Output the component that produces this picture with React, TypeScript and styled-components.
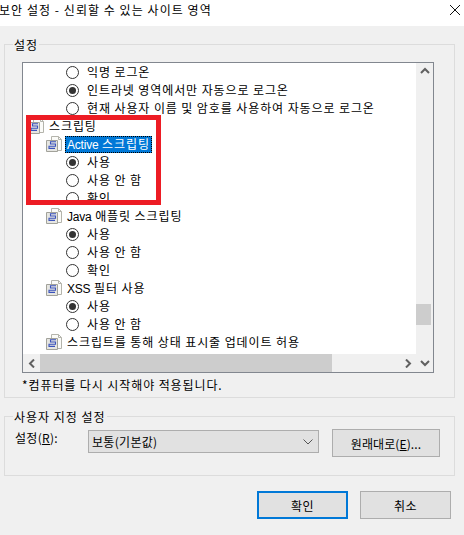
import React from "react";
import styled, { createGlobalStyle } from "styled-components";

const GlobalStyle = createGlobalStyle`
  html, body {
    margin: 0;
    padding: 0;
    background: #f0f0f0;
  }
  body {
    font-family: "Noto Sans CJK KR", "Liberation Sans", sans-serif;
    font-size: 12px;
    color: #000;
  }
`;

const Dialog = styled.div`
  position: relative;
  width: 464px;
  height: 535px;
  overflow: hidden;
  background: #f0f0f0;
`;

const TitleBar = styled.header`
  height: 26px;
  background: #fff;
  display: flex;
  align-items: center;
  justify-content: space-between;
  padding: 0 3px 6px 0;
  box-sizing: border-box;
  font-size: 12px;
  letter-spacing: 1.05px;
`;

const TitleText = styled.span`
  margin-left: -1px;
  line-height: 20px;
`;

const Body = styled.div`
  padding: 18px 9px 0 4px;
  display: flex;
  flex-direction: column;
`;

const Group = styled.section<{ $height: number; $mt?: number }>`
  position: relative;
  box-sizing: border-box;
  height: ${(p) => p.$height}px;
  margin-top: ${(p) => p.$mt ?? 0}px;
  border: 1px solid #dcdcdc;
`;

const Legend = styled.div`
  position: absolute;
  left: 8px;
  top: -9px;
  padding: 0 1px;
  background: #f0f0f0;
  line-height: 18px;
  letter-spacing: 1px;
`;

const ListFrame = styled.div`
  margin: 17px 20px 0 17px;
  height: 311px;
  box-sizing: border-box;
  border: 1px solid #82878f;
  background: #f0f0f0;
  display: grid;
  grid-template-columns: 393px 1fr;
  grid-template-rows: 291px 1fr;
`;

const Tree = styled.ul`
  margin: 0;
  padding: 0;
  list-style: none;
  background: #fff;
  overflow: hidden;
`;

const Row = styled.li<{ $indent: number }>`
  height: 18px;
  display: flex;
  align-items: center;
  padding-left: ${(p) => p.$indent}px;
  white-space: nowrap;
  letter-spacing: 0.9px;
`;

const Radio = styled.span<{ $checked?: boolean }>`
  flex: none;
  width: 13px;
  height: 13px;
  box-sizing: border-box;
  border: 1px solid #333;
  border-radius: 50%;
  margin-right: 8px;
  display: flex;
  align-items: center;
  justify-content: center;
  &::after {
    content: "";
    display: ${(p) => (p.$checked ? "block" : "none")};
    width: 7px;
    height: 7px;
    border-radius: 50%;
    background: #333;
  }
`;

const RadioLabel = styled.span`
  line-height: 16px;
`;

const HeadLabel = styled.span<{ $selected?: boolean }>`
  line-height: 16px;
  margin-left: ${(p) => (p.$selected ? "3px" : "5px")};
  ${(p) =>
    p.$selected
      ? `padding: 0 2px;
         background: #0078d7;
         color: #fff;
         height: 17px;
         outline: 1px dotted #000;
         outline-offset: -1px;`
      : ""}
`;

const Latin = styled.span`
  font-family: "Liberation Sans", sans-serif;
  letter-spacing: -0.2px;
`;

const VScroll = styled.div`
  grid-column: 2;
  grid-row: 1 / span 2;
  display: flex;
  flex-direction: column;
  align-items: stretch;
`;

const ArrowCell = styled.div`
  flex: none;
  height: 17px;
  display: flex;
  align-items: center;
  justify-content: center;
`;

const VTrack = styled.div`
  flex: 1;
  padding-top: 224px;
`;

const VThumb = styled.div`
  height: 21px;
  width: 15px;
  background: #cdcdcd;
`;

const HScroll = styled.div`
  grid-column: 1;
  grid-row: 2;
  display: flex;
  align-items: stretch;
`;

const HArrowCell = styled.div`
  flex: none;
  width: 17px;
  display: flex;
  align-items: center;
  justify-content: center;
`;

const HTrack = styled.div`
  flex: 1;
`;

const HThumb = styled.div`
  width: 292px;
  height: 100%;
  background: #cdcdcd;
`;

const Note = styled.p`
  margin: 3px 0 0 17px;
  line-height: 18px;
  letter-spacing: 0.9px;
`;

const SettingRow = styled.div`
  display: flex;
  align-items: flex-start;
  padding: 13px 0 0 10px;
`;

const FieldLabel = styled.label`
  width: 73px;
  line-height: 18px;
  margin-top: -1px;
  letter-spacing: 0.3px;
  u {
    text-decoration: underline;
  }
`;

const Select = styled.div`
  box-sizing: border-box;
  width: 231px;
  height: 23px;
  background: #e1e1e1;
  border: 1px solid #adadad;
  display: flex;
  align-items: center;
  justify-content: space-between;
  padding: 0 5px 0 3px;
  letter-spacing: 0.3px;
`;

const Button = styled.button<{ $primary?: boolean; $width?: number }>`
  box-sizing: border-box;
  width: ${(p) => p.$width ?? 91}px;
  height: 28px;
  padding: 0;
  font: inherit;
  color: #000;
  letter-spacing: 0.5px;
  background: #e1e1e1;
  border: ${(p) => (p.$primary ? "2px solid #0078d7" : "1px solid #adadad")};
  border-radius: 0;
`;

const ResetButton = styled(Button)`
  margin: -1px 0 0 13px;
  letter-spacing: 0.1px;
`;

const Footer = styled.footer`
  display: flex;
  justify-content: flex-end;
  gap: 12px;
  margin-top: 15px;
  margin-right: 4px;
`;

const Highlight = styled.div`
  position: absolute;
  left: 26px;
  top: 115px;
  width: 135px;
  height: 90px;
  box-sizing: border-box;
  border: 5px solid #ed1c24;
  pointer-events: none;
`;

const IconWrap = styled.svg`
  flex: none;
`;

const CloseGlyph = styled.svg`
  margin-right: 1px;
`;

const CloseIcon = () => (
  <CloseGlyph width="10" height="10" viewBox="0 0 10 10">
    <path d="M0 0L10 10M10 0L0 10" stroke="#111" strokeWidth="1" fill="none" />
  </CloseGlyph>
);

const ScriptIcon = () => (
  <IconWrap width="16" height="16" viewBox="0 0 16 16">
    <path d="M5.5 .5H12.5L15.5 3.5V14.5H5.5Z" fill="#fbfbf8" stroke="#b4b4ac" />
    <path d="M12.5 .5V3.5H15.5" fill="none" stroke="#b4b4ac" />
    <path d="M.5 4.5H11.5V15.5H.5Z" fill="#e6e6e2" stroke="#a2a29a" />
    <path
      d="M10 5.8H4.5V8H9.5V10.2H3V12.4H9"
      fill="none"
      stroke="#3a52bc"
      strokeWidth="1.1"
    />
  </IconWrap>
);

const Chevron = ({ dir }: { dir: "up" | "down" | "left" | "right" }) => {
  const d = {
    up: "M1 6L5 2L9 6",
    down: "M1 2L5 6L9 2",
    left: "M7 0.5L3 4.5L7 8.5",
    right: "M3 0.5L7 4.5L3 8.5",
  }[dir];
  return (
    <svg width="10" height="9" viewBox="0 0 10 9">
      <path d={d} stroke="#606060" strokeWidth="2" fill="none" />
    </svg>
  );
};

const SelectChevron = () => (
  <svg width="10" height="6" viewBox="0 0 10 6">
    <path d="M.5 .5L5 5L9.5 .5" stroke="#555" strokeWidth="1" fill="none" />
  </svg>
);

type Item =
  | { kind: "radio"; label: string; checked?: boolean }
  | { kind: "head"; label: string; latin?: string; level: 1 | 2; selected?: boolean };

const items: Item[] = [
  { kind: "radio", label: "익명 로그온" },
  { kind: "radio", label: "인트라넷 영역에서만 자동으로 로그온", checked: true },
  { kind: "radio", label: "현재 사용자 이름 및 암호를 사용하여 자동으로 로그온" },
  { kind: "head", label: "스크립팅", level: 1 },
  { kind: "head", latin: "Active", label: " 스크립팅", level: 2, selected: true },
  { kind: "radio", label: "사용", checked: true },
  { kind: "radio", label: "사용 안 함" },
  { kind: "radio", label: "확인" },
  { kind: "head", latin: "Java", label: " 애플릿 스크립팅", level: 2 },
  { kind: "radio", label: "사용", checked: true },
  { kind: "radio", label: "사용 안 함" },
  { kind: "radio", label: "확인" },
  { kind: "head", latin: "XSS", label: " 필터 사용", level: 2 },
  { kind: "radio", label: "사용", checked: true },
  { kind: "radio", label: "사용 안 함" },
  { kind: "head", label: "스크립트를 통해 상태 표시줄 업데이트 허용", level: 2 },
];

const App = () => {
  return (
    <Dialog>
      <GlobalStyle />
      <TitleBar>
        <TitleText>보안 설정 - 신뢰할 수 있는 사이트 영역</TitleText>
        <CloseIcon />
      </TitleBar>
      <Body>
        <Group $height={354}>
          <Legend>설정</Legend>
          <ListFrame>
            <Tree>
              {items.map((item, i) =>
                item.kind === "radio" ? (
                  <Row key={i} $indent={43}>
                    <Radio $checked={item.checked} />
                    <RadioLabel>{item.label}</RadioLabel>
                  </Row>
                ) : (
                  <Row key={i} $indent={item.level === 1 ? 5 : 23}>
                    <ScriptIcon />
                    <HeadLabel $selected={item.selected}>
                      {item.latin && <Latin>{item.latin}</Latin>}
                      {item.label}
                    </HeadLabel>
                  </Row>
                )
              )}
            </Tree>
            <VScroll>
              <ArrowCell>
                <Chevron dir="up" />
              </ArrowCell>
              <VTrack>
                <VThumb />
              </VTrack>
              <ArrowCell>
                <Chevron dir="down" />
              </ArrowCell>
            </VScroll>
            <HScroll>
              <HArrowCell>
                <Chevron dir="left" />
              </HArrowCell>
              <HTrack>
                <HThumb />
              </HTrack>
              <HArrowCell>
                <Chevron dir="right" />
              </HArrowCell>
            </HScroll>
          </ListFrame>
          <Note>*컴퓨터를 다시 시작해야 적용됩니다.</Note>
        </Group>
        <Group $height={60} $mt={18}>
          <Legend>사용자 지정 설정</Legend>
          <SettingRow>
            <FieldLabel>
              설정(<u>R</u>):
            </FieldLabel>
            <Select>
              <span>보통(기본값)</span>
              <SelectChevron />
            </Select>
            <ResetButton $width={108}>
              원래대로(<u>E</u>)...
            </ResetButton>
          </SettingRow>
        </Group>
        <Footer>
          <Button $primary>확인</Button>
          <Button>취소</Button>
        </Footer>
      </Body>
      <Highlight />
    </Dialog>
  );
};

export default App;
